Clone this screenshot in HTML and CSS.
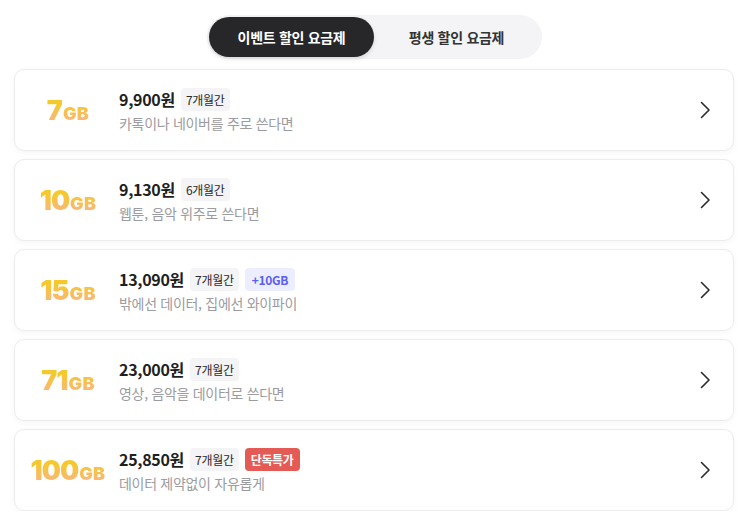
FILE: index.html
```html
<!DOCTYPE html>
<html lang="ko">
<head>
<meta charset="utf-8">
<link rel="stylesheet" href="styles.css">
</head>
<body>
<div class="page">
  <div class="tabs">
    <button class="tab active">이벤트 할인 요금제</button>
    <button class="tab">평생 할인 요금제</button>
  </div>
  <ul class="plans">
    <li class="plan">
      <div class="data"><span class="num">7</span><span class="unit">GB</span></div>
      <div class="info">
        <div class="row"><span class="price">9,900원</span><span class="chip">7개월간</span></div>
        <div class="desc">카톡이나 네이버를 주로 쓴다면</div>
      </div>
      <svg class="chev" width="12" height="18" viewBox="0 0 12 18"><path d="M2.5 1.5 L10 9 L2.5 16.5" fill="none" stroke="#2a2a2a" stroke-width="1.6" stroke-linecap="round" stroke-linejoin="round"/></svg>
    </li>
    <li class="plan">
      <div class="data"><span class="num">10</span><span class="unit">GB</span></div>
      <div class="info">
        <div class="row"><span class="price">9,130원</span><span class="chip">6개월간</span></div>
        <div class="desc">웹툰, 음악 위주로 쓴다면</div>
      </div>
      <svg class="chev" width="12" height="18" viewBox="0 0 12 18"><path d="M2.5 1.5 L10 9 L2.5 16.5" fill="none" stroke="#2a2a2a" stroke-width="1.6" stroke-linecap="round" stroke-linejoin="round"/></svg>
    </li>
    <li class="plan">
      <div class="data"><span class="num">15</span><span class="unit">GB</span></div>
      <div class="info">
        <div class="row"><span class="price">13,090원</span><span class="chip">7개월간</span><span class="chip bonus">+10GB</span></div>
        <div class="desc">밖에선 데이터, 집에선 와이파이</div>
      </div>
      <svg class="chev" width="12" height="18" viewBox="0 0 12 18"><path d="M2.5 1.5 L10 9 L2.5 16.5" fill="none" stroke="#2a2a2a" stroke-width="1.6" stroke-linecap="round" stroke-linejoin="round"/></svg>
    </li>
    <li class="plan">
      <div class="data"><span class="num">71</span><span class="unit">GB</span></div>
      <div class="info">
        <div class="row"><span class="price">23,000원</span><span class="chip">7개월간</span></div>
        <div class="desc">영상, 음악을 데이터로 쓴다면</div>
      </div>
      <svg class="chev" width="12" height="18" viewBox="0 0 12 18"><path d="M2.5 1.5 L10 9 L2.5 16.5" fill="none" stroke="#2a2a2a" stroke-width="1.6" stroke-linecap="round" stroke-linejoin="round"/></svg>
    </li>
    <li class="plan">
      <div class="data"><span class="num">100</span><span class="unit">GB</span></div>
      <div class="info">
        <div class="row"><span class="price">25,850원</span><span class="chip">7개월간</span><span class="chip hot">단독특가</span></div>
        <div class="desc">데이터 제약없이 자유롭게</div>
      </div>
      <svg class="chev" width="12" height="18" viewBox="0 0 12 18"><path d="M2.5 1.5 L10 9 L2.5 16.5" fill="none" stroke="#2a2a2a" stroke-width="1.6" stroke-linecap="round" stroke-linejoin="round"/></svg>
    </li>
  </ul>
</div>
</body>
</html>
```
FILE: styles.css
```css
* { box-sizing: border-box; }
html, body {
  margin: 0;
  padding: 0;
  background: #ffffff;
}
body {
  font-family: "Noto Sans CJK KR", "Noto Sans", sans-serif;
  color: #222;
}
.page {
  width: 720px;
  margin-left: 14px;
  padding-top: 15px;
}
.tabs {
  display: flex;
  width: 335px;
  margin: 0 0 10px 193px;
  padding: 2px;
  background: #f4f4f6;
  border-radius: 22px;
}
.tab {
  width: 165px;
  height: 40px;
  border: 0;
  border-radius: 20px;
  background: transparent;
  font-family: "Noto Sans CJK KR", sans-serif;
  font-size: 14px;
  font-weight: 700;
  color: #333;
  letter-spacing: -0.3px;
  padding: 0;
}
.tab.active {
  background: #27272a;
  color: #fff;
  box-shadow: 0 2px 4px rgba(0,0,0,0.12);
}
.plans {
  list-style: none;
  margin: 0;
  padding: 0;
  display: flex;
  flex-direction: column;
  gap: 8px;
}
.plan {
  display: flex;
  align-items: center;
  height: 82px;
  background: #fff;
  border: 1px solid #ececec;
  border-radius: 10px;
  box-shadow: 0 2px 6px rgba(0,0,0,0.04);
  padding-right: 22px;
}
.data {
  width: 106px;
  text-align: center;
  font-family: "Inter", "Lato", sans-serif;
  font-weight: 900;
  background: linear-gradient(180deg, #f5c92c 25%, #f9b67e 92%);
  -webkit-background-clip: text;
  background-clip: text;
  color: transparent;
  line-height: 1;
  letter-spacing: -1px;
}
.num { font-size: 27px; }
.unit { font-size: 18px; letter-spacing: 0.3px; margin-left: 1px; }
.info {
  flex: 1;
  display: flex;
  flex-direction: column;
  gap: 2px;
  margin-left: -2px;
}
.row {
  display: flex;
  align-items: center;
  gap: 6px;
}
.price {
  font-size: 16px;
  font-weight: 700;
  color: #1f1f1f;
  letter-spacing: -0.3px;
}
.chip {
  display: inline-flex;
  align-items: center;
  height: 23px;
  padding: 0 5px;
  background: #f4f4f6;
  border-radius: 4px;
  font-size: 12px;
  color: #2a2a2a;
  letter-spacing: -0.3px;
}
.chip.bonus {
  background: #eceeff;
  color: #5b5ef0;
  font-weight: 700;
  padding: 0 7px;
}
.chip.hot {
  background: #e45b55;
  color: #fff;
  font-weight: 700;
  padding: 0 6px;
}
.desc {
  font-size: 14px;
  color: #9b9ba0;
  letter-spacing: -0.3px;
}
.chev { display: block; }
```
